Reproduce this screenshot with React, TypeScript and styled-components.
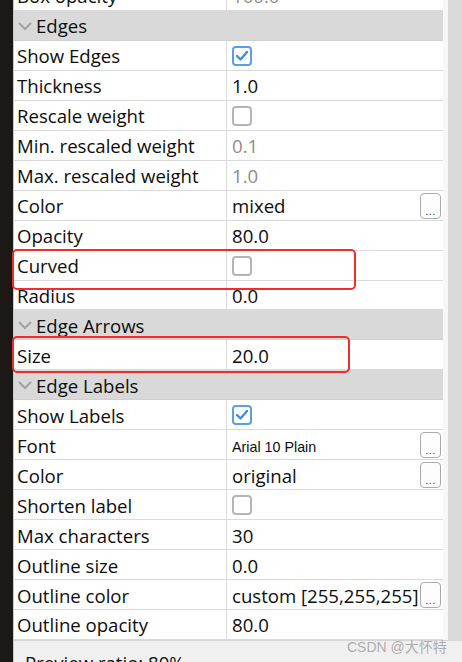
import React from "react";
import styled, { createGlobalStyle } from "styled-components";

const Global = createGlobalStyle`
  html, body { margin: 0; padding: 0; background: #1c1815; }
  body { width: 462px; height: 662px; overflow: hidden; font-family: "Open Sans", "Noto Sans", sans-serif; }
  #root { width: 462px; height: 662px; }
`;

const Screen = styled.div`
  position: relative;
  display: flex;
  width: 462px;
  height: 662px;
  overflow: hidden;
`;

const DarkStrip = styled.div`
  width: 13px;
  flex: none;
  background: #1c1815;
`;

const Panel = styled.div`
  flex: 1;
  display: flex;
  flex-direction: column;
  border-left: 1px solid #c9c9c9;
  background: #ffffff;
  min-width: 0;
`;

const Viewport = styled.div`
  height: 641px;
  flex: none;
  display: flex;
  overflow: hidden;
  border-bottom: 1px solid #d6d6d6;
  box-sizing: border-box;
`;

const Table = styled.div`
  width: 429px;
  flex: none;
  margin-top: -19px;
  display: flex;
  flex-direction: column;
`;

const ScrollTrack = styled.div`
  flex: 1;
  display: flex;
  justify-content: flex-end;
  background: #f7f7f7;
`;

const ScrollThumb = styled.div`
  width: 14px;
  background: #dadada;
`;

const Row = styled.div`
  display: grid;
  grid-template-columns: 213px 1fr;
  height: 30px;
  box-sizing: border-box;
  border-bottom: 1px solid #dadada;
  font-size: 18.6px;
  color: #0d0d0d;
`;

const Label = styled.div`
  display: flex;
  align-items: center;
  padding-left: 3px;
  padding-top: 1px;
  border-right: 1px solid #dadada;
  white-space: nowrap;
  overflow: hidden;
`;

const Value = styled.div<{ $muted?: boolean; $small?: boolean }>`
  display: flex;
  align-items: center;
  justify-content: space-between;
  padding-left: 5px;
  padding-right: 2px;
  padding-top: 1px;
  color: ${(p) => (p.$muted ? "#8c8c8c" : "#0d0d0d")};
  font-family: ${(p) => (p.$small ? '"Liberation Sans", Arial, sans-serif' : "inherit")};
  font-size: ${(p) => (p.$small ? "14.3px" : "18.6px")};
  white-space: nowrap;
  overflow: hidden;
`;

const ValueText = styled.span<{ $small?: boolean }>`
  padding-top: ${(p) => (p.$small ? "4px" : "0")};
`;

const HeaderRow = styled.div`
  display: flex;
  align-items: center;
  gap: 3px;
  height: 30px;
  box-sizing: border-box;
  padding-left: 3px;
  padding-top: 1px;
  background: #d9d9d9;
  border-bottom: 1px solid #d0d0d0;
  font-size: 18.6px;
  color: #0d0d0d;
`;

const Box = styled.div<{ $checked?: boolean }>`
  width: 20px;
  height: 20px;
  box-sizing: border-box;
  border-radius: 4px;
  border: 2px solid ${(p) => (p.$checked ? "#5b9fe3" : "#b5b5b5")};
  background: #fff;
  display: flex;
  align-items: center;
  justify-content: center;
`;

const DotsButton = styled.div`
  width: 21px;
  height: 26px;
  flex: none;
  box-sizing: border-box;
  border: 1px solid #ababab;
  border-radius: 4px;
  background: #fdfdfd;
  display: flex;
  align-items: flex-end;
  justify-content: center;
  font-family: "Liberation Sans", Arial, sans-serif;
  font-size: 11px;
  line-height: 14px;
  color: #333;
  letter-spacing: 0.5px;
`;

const Footer = styled.div`
  flex: 1;
  background: #f0f0f0;
  padding: 11px 0 0 11px;
  font-size: 18.6px;
  color: #111;
  line-height: 22px;
  white-space: nowrap;
`;

const Highlight = styled.div<{ $l: number; $t: number; $w: number; $h: number }>`
  position: absolute;
  left: ${(p) => p.$l}px;
  top: ${(p) => p.$t}px;
  width: ${(p) => p.$w}px;
  height: ${(p) => p.$h}px;
  box-sizing: border-box;
  border: 2px solid #f52a2a;
  border-radius: 5px;
  pointer-events: none;
`;

const Watermark = styled.div`
  position: absolute;
  left: 347px;
  top: 636px;
  font-family: "Liberation Sans", "Noto Sans CJK SC", sans-serif;
  font-size: 14px;
  color: rgba(150, 150, 150, 0.75);
  white-space: nowrap;
`;

const Chevron = () => (
  <svg width="16" height="10" viewBox="0 0 16 10">
    <polyline points="2,2 8,8 14,2" fill="none" stroke="#a3a3a3" strokeWidth="2" />
  </svg>
);

const Check = ({ checked }: { checked?: boolean }) => (
  <Box $checked={checked}>
    {checked && (
      <svg width="14" height="12" viewBox="0 0 14 12">
        <polyline points="2,6 5.5,9.5 12,2" fill="none" stroke="#3d8ce0" strokeWidth="2.4" strokeLinecap="round" strokeLinejoin="round" />
      </svg>
    )}
  </Box>
);

type Item =
  | { kind: "header"; title: string }
  | { kind: "row"; label: string; value?: string; check?: boolean; checked?: boolean; muted?: boolean; small?: boolean; dots?: boolean };

const items: Item[] = [
  { kind: "row", label: "Box opacity", value: "100.0", muted: true },
  { kind: "header", title: "Edges" },
  { kind: "row", label: "Show Edges", check: true, checked: true },
  { kind: "row", label: "Thickness", value: "1.0" },
  { kind: "row", label: "Rescale weight", check: true },
  { kind: "row", label: "Min. rescaled weight", value: "0.1", muted: true },
  { kind: "row", label: "Max. rescaled weight", value: "1.0", muted: true },
  { kind: "row", label: "Color", value: "mixed", dots: true },
  { kind: "row", label: "Opacity", value: "80.0" },
  { kind: "row", label: "Curved", check: true },
  { kind: "row", label: "Radius", value: "0.0" },
  { kind: "header", title: "Edge Arrows" },
  { kind: "row", label: "Size", value: "20.0" },
  { kind: "header", title: "Edge Labels" },
  { kind: "row", label: "Show Labels", check: true, checked: true },
  { kind: "row", label: "Font", value: "Arial 10 Plain", small: true, dots: true },
  { kind: "row", label: "Color", value: "original", dots: true },
  { kind: "row", label: "Shorten label", check: true },
  { kind: "row", label: "Max characters", value: "30" },
  { kind: "row", label: "Outline size", value: "0.0" },
  { kind: "row", label: "Outline color", value: "custom [255,255,255]", dots: true },
  { kind: "row", label: "Outline opacity", value: "80.0" },
];

export default function App() {
  return (
    <>
      <Global />
      <Screen>
        <DarkStrip />
        <Panel>
          <Viewport>
            <Table>
              {items.map((it, i) =>
                it.kind === "header" ? (
                  <HeaderRow key={i}>
                    <Chevron />
                    <span>{it.title}</span>
                  </HeaderRow>
                ) : (
                  <Row key={i}>
                    <Label>{it.label}</Label>
                    <Value $muted={it.muted} $small={it.small}>
                      {it.check ? (
                        <Check checked={it.checked} />
                      ) : (
                        <ValueText $small={it.small}>{it.value}</ValueText>
                      )}
                      {it.dots && <DotsButton>...</DotsButton>}
                    </Value>
                  </Row>
                )
              )}
            </Table>
            <ScrollTrack>
              <ScrollThumb />
            </ScrollTrack>
          </Viewport>
          <Footer>Preview ratio: 80%</Footer>
        </Panel>
        <Highlight $l={12} $t={249} $w={344} $h={41} />
        <Highlight $l={12} $t={336} $w={338} $h={37} />
        <Watermark>CSDN @大怀特</Watermark>
      </Screen>
    </>
  );
}
